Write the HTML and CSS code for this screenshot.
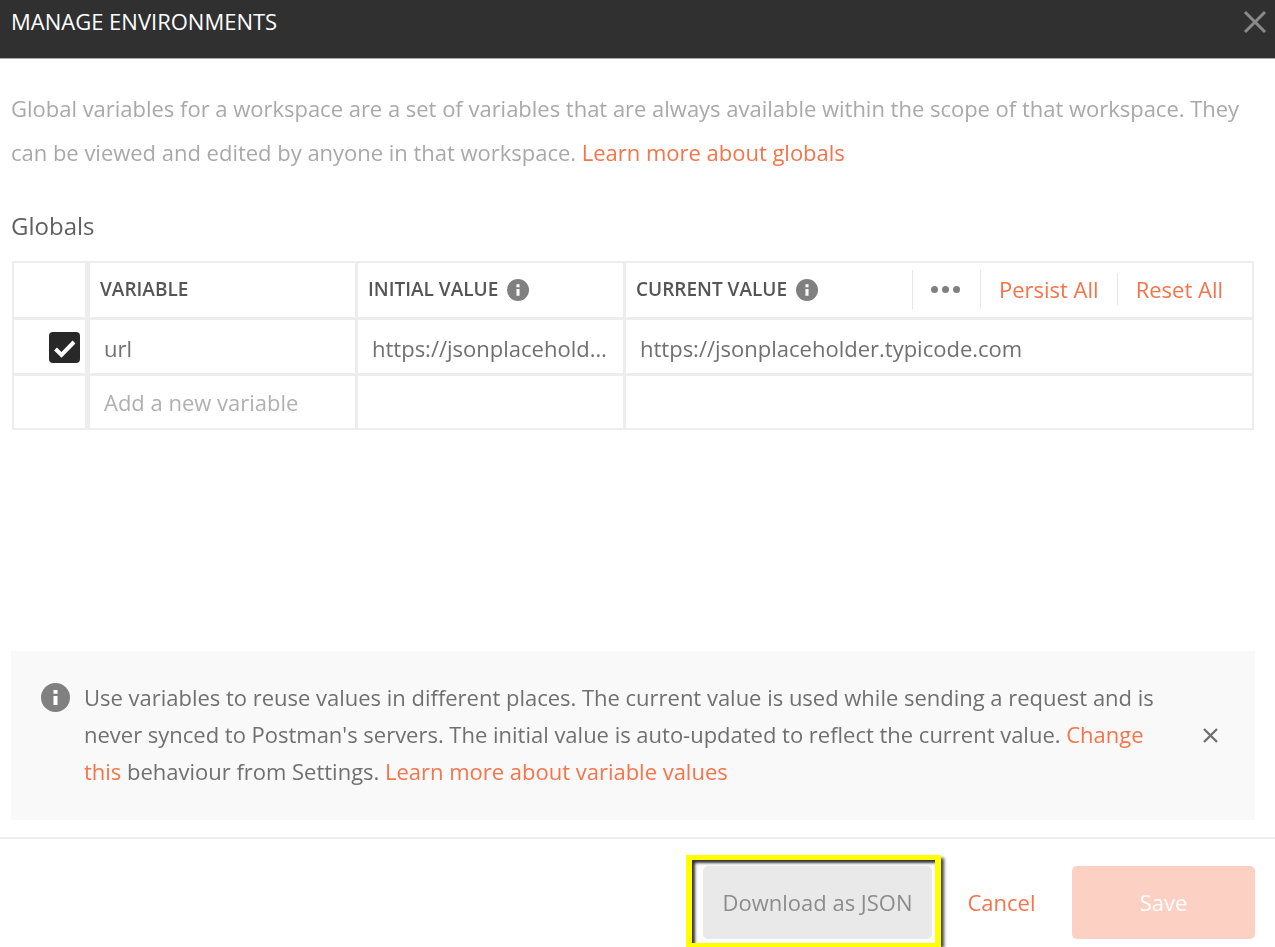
FILE: index.html
```html
<!DOCTYPE html>
<html lang="en">
<head>
<meta charset="utf-8">
<title>Manage Environments</title>
<link rel="stylesheet" href="styles.css">
</head>
<body>
<div class="modal">
  <header class="modal-header">
    <h1 class="modal-title">MANAGE ENVIRONMENTS</h1>
    <svg class="modal-close" viewBox="0 0 24 24" aria-hidden="true"><path d="M2 2 22 22M22 2 2 22"/></svg>
  </header>
  <main class="modal-body">
    <p class="intro">Global variables for a workspace are a set of variables that are always available within the scope of that workspace. They can be viewed and edited by anyone in that workspace. <a class="link">Learn more about globals</a></p>
    <h2 class="section-title">Globals</h2>
    <div class="table">
      <div class="cell head check"></div>
      <div class="cell head key">VARIABLE</div>
      <div class="cell head key">INITIAL VALUE
        <svg class="info small" viewBox="0 0 20 20" aria-hidden="true"><circle cx="10" cy="10" r="10"/><path class="info-i" d="M8.6 9.2h2.8v6H8.6zM8.6 4.8h2.8v2.6H8.6z"/></svg>
      </div>
      <div class="cell head key current">
        <span class="current-label">CURRENT VALUE
          <svg class="info small" viewBox="0 0 20 20" aria-hidden="true"><circle cx="10" cy="10" r="10"/><path class="info-i" d="M8.6 9.2h2.8v6H8.6zM8.6 4.8h2.8v2.6H8.6z"/></svg>
        </span>
        <span class="actions">
          <span class="action dots"><i></i><i></i><i></i></span>
          <span class="action link persist">Persist All</span>
          <span class="action link reset">Reset All</span>
        </span>
      </div>
      <div class="cell check row-a"><span class="checkbox"><svg viewBox="0 0 31 31" aria-hidden="true"><path d="M6.5 17 12.5 23 25 10"/></svg></span></div>
      <div class="cell value row-a">url</div>
      <div class="cell value row-a"><span class="ellipsis">https://jsonplaceholder.typicode.com</span></div>
      <div class="cell value row-a">https://jsonplaceholder.typicode.com</div>
      <div class="cell check"></div>
      <div class="cell value placeholder">Add a new variable</div>
      <div class="cell value"></div>
      <div class="cell value"></div>
    </div>
    <div class="notice">
      <svg class="info notice-icon" viewBox="0 0 20 20" aria-hidden="true"><circle cx="10" cy="10" r="10"/><path class="info-i" d="M8.6 9h2.8v6.2H8.6zM8.6 4.8h2.8v2.6H8.6z"/></svg>
      <p class="notice-text">Use variables to reuse values in different places. The current value is used while sending a request and is never synced to Postman's servers. The initial value is auto-updated to reflect the current value. <a class="link">Change this</a> behaviour from Settings. <a class="link">Learn more about variable values</a></p>
      <svg class="notice-close" viewBox="0 0 17 17" aria-hidden="true"><path d="M2 2 15 15M15 2 2 15"/></svg>
    </div>
  </main>
  <footer class="modal-footer">
    <div class="highlight"><button class="btn btn-secondary">Download as JSON</button></div>
    <button class="btn btn-text">Cancel</button>
    <button class="btn btn-primary">Save</button>
  </footer>
</div>
</body>
</html>
```
FILE: styles.css
```css
* { box-sizing: border-box; }
html, body { margin: 0; height: 100%; }
body {
  background: #fff;
  color: #707070;
  font-family: "Open Sans", "Noto Sans", sans-serif;
  font-size: 22px;
  overflow: hidden;
}
.modal { display: flex; flex-direction: column; height: 947px; filter: blur(.35px); }
.modal-header {
  height: 59px;
  flex: none;
  background: #303030;
  display: flex;
  align-items: center;
  justify-content: space-between;
  padding: 0 8px 14px 11px;
  border-bottom: 1px solid #aaa;
}
.modal-title { margin: -2px 0 0; color: #fff; font-size: 22px; font-weight: 400; }
.modal-close { width: 24px; height: 24px; fill: none; stroke: #8a8a8a; stroke-width: 3; }
.modal-body { flex: 1; display: flex; flex-direction: column; padding: 27px 20px 0 11px; }
.intro { margin: 0; color: #a9a9a9; line-height: 44px; letter-spacing: -.015px; }
.link { color: #f6744a; }
.section-title { margin: 37px 0 0; color: #606060; font-size: 24px; font-weight: 400; line-height: 30px; }
.table {
  margin: 20px 0 0 1px;
  width: 1242px;
  display: grid;
  grid-template-columns: 76px 268px 268px 1fr;
  grid-template-rows: 57px 56px 52px;
  border: 2px solid #ededed;
}
.cell {
  display: flex;
  align-items: center;
  border-right: 3px solid #ededed;
  border-bottom: 3px solid #ededed;
  min-width: 0;
}
.cell:nth-child(4n) { border-right: 0; }
.cell:nth-child(4n+1) { border-right-width: 5px; }
.cell:nth-last-child(-n+4) { border-bottom: 0; }
.check { justify-content: flex-end; padding-right: 5px; }
.key { padding: 0 0 2px 10px; color: #555; font-size: 19px; font-weight: 600; gap: 9px; }
.value { padding-left: 14px; font-size: 22px; }
.row-a { padding-top: 2px; }
.ellipsis { display: block; padding-right: 12px; white-space: nowrap; overflow: hidden; text-overflow: ellipsis; }
.placeholder { color: #b0b0b0; }
.info { fill: #808080; flex: none; }
.info-i { fill: #fff; }
.info.small { width: 22px; height: 22px; margin-top: 2px; }
.current { justify-content: space-between; padding-right: 29px; }
.current-label { display: flex; align-items: center; gap: 9px; }
.actions { display: flex; align-items: center; height: 100%; font-weight: 400; }
.action { display: flex; align-items: center; height: 32px; font-size: 22px; }
.dots { height: 39px; gap: 4px; padding: 0 20px 0 18px; border-left: 1px solid #e6e6e6; border-right: 1px solid #e6e6e6; }
.dots i { width: 7px; height: 7px; border-radius: 50%; background: #808080; }
.persist { padding: 0 18px; border-right: 1px solid #e6e6e6; }
.reset { padding-left: 18px; }
.checkbox {
  width: 31px;
  height: 31px;
  background: #282828;
  border-radius: 4px;
  display: flex;
}
.checkbox svg { width: 31px; height: 31px; fill: none; stroke: #fff; stroke-width: 4; }
.notice {
  margin: auto 0 17px 0;
  width: 1244px;
  height: 169px;
  background: #f9f9f9;
  display: flex;
  padding: 28px 0 0 30px;
}
.notice-icon { width: 29px; height: 29px; margin-top: 4px; }
.notice-text { margin: 0 0 0 14px; width: 1085px; line-height: 37px; letter-spacing: -.012px; }
.notice-close { width: 17px; height: 17px; margin: 48px 0 0 33px; fill: none; stroke: #707070; stroke-width: 2.4; }
.modal-footer {
  height: 110px;
  flex: none;
  border-top: 2px solid #eee;
  display: flex;
  align-items: flex-start;
  justify-content: flex-end;
  padding: 27px 20px 0 0;
}
.btn { border: 0; border-radius: 5px; font: inherit; height: 73px; padding: 0 0 1px; }
.highlight {
  margin-top: -11px;
  width: 255px;
  height: 92px;
  padding: 6px 0 0 11px;
  border: solid #ffff00;
  border-width: 5px 6px 4px 6px;
  box-shadow: inset 4px 4px 3px -1px #333, 4px 2px 3px -1px #444;
  display: flex;
}
.btn-secondary { width: 229px; background: #e9e9e9; color: #8c8c8c; }
.btn-text { width: 121px; margin-right: 10px; background: none; color: #f6744a; }
.btn-primary { width: 183px; background: #fcd0c3; color: #fff; }
```
